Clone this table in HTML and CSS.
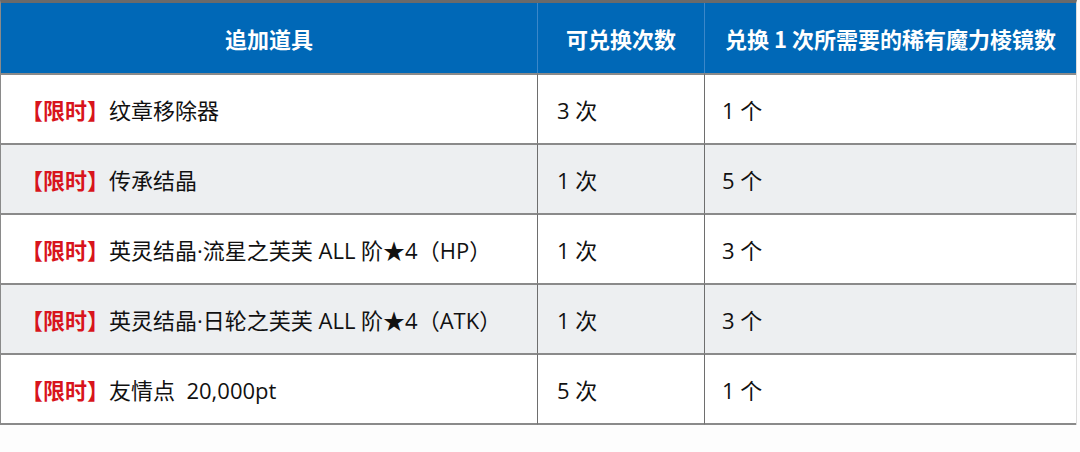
FILE: index.html
```html
<!DOCTYPE html>
<html lang="zh-CN">
<head>
<meta charset="utf-8">
<link rel="stylesheet" href="styles.css">
</head>
<body>
<table class="items">
  <thead>
    <tr>
      <th class="c1">追加道具</th>
      <th class="c2">可兑换次数</th>
      <th class="c3">兑换 1 次所需要的稀有魔力棱镜数</th>
    </tr>
  </thead>
  <tbody>
    <tr>
      <td><span class="tag">【限时】</span>纹章移除器</td>
      <td>3 次</td>
      <td>1 个</td>
    </tr>
    <tr class="alt">
      <td><span class="tag">【限时】</span>传承结晶</td>
      <td>1 次</td>
      <td>5 个</td>
    </tr>
    <tr>
      <td><span class="tag">【限时】</span>英灵结晶·流星之芙芙 ALL 阶★4（HP）</td>
      <td>1 次</td>
      <td>3 个</td>
    </tr>
    <tr class="alt">
      <td><span class="tag">【限时】</span>英灵结晶·日轮之芙芙 ALL 阶★4（ATK）</td>
      <td>1 次</td>
      <td>3 个</td>
    </tr>
    <tr>
      <td><span class="tag">【限时】</span>友情点&nbsp;&nbsp;20,000pt</td>
      <td>5 次</td>
      <td>1 个</td>
    </tr>
  </tbody>
</table>
</body>
</html>
```
FILE: styles.css
```css
html, body {
  margin: 0;
  padding: 0;
  background: #fdfdfd;
}
body {
  font-family: "Open Sans", "Noto Sans CJK SC", sans-serif;
  color: #111;
}
.items {
  width: 1077px;
  border-collapse: separate;
  border-spacing: 0;
  border-top: 3px solid #6a6a6a;
  border-left: 1px solid #8a8a8a;
  border-right: 1px solid #dcdcdc;
  table-layout: fixed;
}
.items th {
  background: #0068b7;
  color: #fff;
  font-weight: 700;
  font-size: 22px;
  height: 70px;
  padding: 0;
  text-align: center;
  font-family: "Noto Sans CJK SC", sans-serif;
  border-right: 1px solid #3b87c9;
}
.items th:last-child {
  border-right: none;
}
.c1 { width: 536px; }
.c2 { width: 166px; }
.items td {
  height: 68px;
  padding: 0 0 0 19px;
  font-size: 22px;
  border-top: 2px solid #8a8a8a;
  border-right: 1px solid #6e6e6e;
  white-space: nowrap;
  background: #fff;
}
.items td:last-child {
  border-right: none;
  padding-left: 17px;
}
.items tr:last-child td {
  border-bottom: 2px solid #8a8a8a;
}
.items tr.alt td {
  background: #edeff1;
}
.items td:first-child {
  padding-left: 20px;
}
.tag {
  color: #d8141c;
  font-weight: 700;
  font-family: "Noto Sans CJK SC", sans-serif;
}
```
